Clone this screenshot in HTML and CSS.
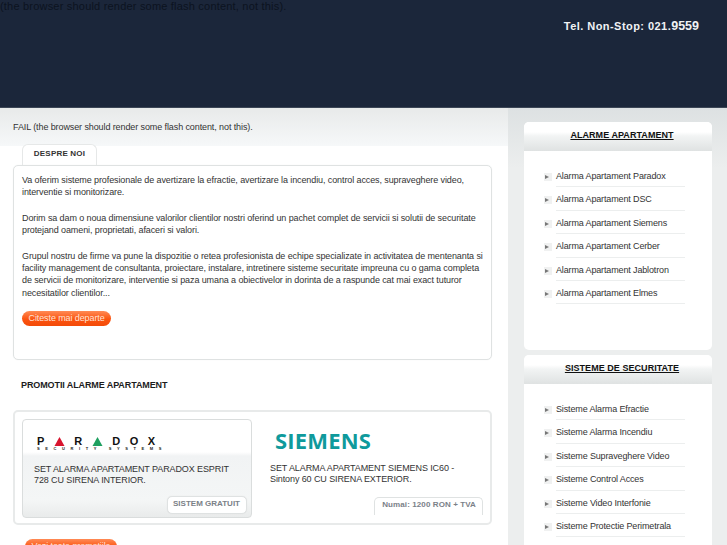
FILE: index.html
```html
<!DOCTYPE html>
<html lang="ro">
<head>
<meta charset="utf-8">
<title>Alarme apartament</title>
<link rel="stylesheet" href="styles.css">
</head>
<body>
<header class="top">
  <p class="flash-top">(the browser should render some flash content, not this).</p>
  <p class="phone">Tel. Non-Stop: 021.<span class="phone-big">9559</span></p>
</header>
<div class="page">
  <main class="main">
    <div class="flash-band">FAIL (the browser should render some flash content, not this).</div>
    <div class="tab">DESPRE NOI</div>
    <section class="about">
      <p>Va oferim sisteme profesionale de avertizare la efractie, avertizare la incendiu, control acces, supraveghere video, interventie si monitorizare.</p>
      <p>Dorim sa dam o noua dimensiune valorilor clientilor nostri oferind un pachet complet de servicii si solutii de securitate protejand oameni, proprietati, afaceri si valori.</p>
      <p>Grupul nostru de firme va pune la dispozitie o retea profesionista de echipe specializate in activitatea de mentenanta si facility management de consultanta, proiectare, instalare, intretinere sisteme securitate impreuna cu o gama completa de servicii de monitorizare, interventie si paza umana a obiectivelor in dorinta de a raspunde cat mai exact tuturor necesitatilor clientilor...</p>
      <a class="btn" href="#">Citeste mai departe</a>
    </section>
    <h2 class="promo-title">PROMOTII ALARME APARTAMENT</h2>
    <section class="promos">
      <article class="promo promo-on">
        <div class="logo logo-paradox">
          <div class="pdx-row">
            <span>P</span>
            <svg class="tri" viewBox="0 0 10 9"><path d="M5 0 10 9H0z" fill="#d8152f"/></svg>
            <span>R</span>
            <svg class="tri" viewBox="0 0 10 9"><path d="M5 0 10 9H0z" fill="#1fa060"/></svg>
            <span>D</span><span>O</span><span>X</span>
          </div>
          <div class="pdx-sub">SECURITY SYSTEMS</div>
        </div>
        <p class="promo-text">SET ALARMA APARTAMENT PARADOX ESPRIT 728 CU SIRENA INTERIOR.</p>
        <div class="badge-row"><span class="badge badge-on">SISTEM GRATUIT</span></div>
      </article>
      <article class="promo promo-off">
        <div class="logo logo-siemens">SIEMENS</div>
        <p class="promo-text">SET ALARMA APARTAMENT SIEMENS IC60 - Sintony 60 CU SIRENA EXTERIOR.</p>
        <div class="badge-row"><span class="badge">Numai: 1200 RON + TVA</span></div>
      </article>
    </section>
    <a class="btn btn-all" href="#">Vezi toate promotiile</a>
  </main>
  <aside class="side">
    <section class="panel panel-first">
      <h3 class="panel-title"><a href="#">ALARME APARTAMENT</a></h3>
      <ul class="menu">
        <li>Alarma Apartament Paradox</li>
        <li>Alarma Apartament DSC</li>
        <li>Alarma Apartament Siemens</li>
        <li>Alarma Apartament Cerber</li>
        <li>Alarma Apartament Jablotron</li>
        <li>Alarma Apartament Elmes</li>
      </ul>
    </section>
    <section class="panel">
      <h3 class="panel-title"><a href="#">SISTEME DE SECURITATE</a></h3>
      <ul class="menu">
        <li>Sisteme Alarma Efractie</li>
        <li>Sisteme Alarma Incendiu</li>
        <li>Sisteme Supraveghere Video</li>
        <li>Sisteme Control Acces</li>
        <li>Sisteme Video Interfonie</li>
        <li>Sisteme Protectie Perimetrala</li>
      </ul>
    </section>
  </aside>
</div>
</body>
</html>
```
FILE: styles.css
```css
* { box-sizing: border-box; }
html, body { margin: 0; padding: 0; height: 100%; overflow: hidden; }
body { font-family: "Liberation Sans", Arial, sans-serif; font-size: 9px; letter-spacing: -.1px; color: #333; background: #fff; }
p, h2, h3, ul { margin: 0; padding: 0; font-size: inherit; }

.top { height: 108px; background: #1b263a; border-bottom: 1px solid #3c4656; display: flex; justify-content: space-between; align-items: flex-start; }
.flash-top { font-size: 11px; line-height: 12px; color: #0c1320; letter-spacing: .2px; }
.phone { margin: 19px 28px 0 0; font-size: 11px; line-height: 14px; font-weight: bold; color: #f0f2f4; letter-spacing: .45px; }
.phone-big { font-size: 12.5px; letter-spacing: 0; }

.page { display: flex; align-items: flex-start; height: 437px; overflow: hidden; }
.main { width: 508px; flex: none; }
.flash-band { height: 38px; padding: 13px 0 0 13px; line-height: 12px; color: #333; background: linear-gradient(#e8eaea, #f6f8f9); }

.tab { margin: -2px 0 0 22px; width: 75px; height: 21px; padding-top: 3px; text-align: center; font-size: 8px; line-height: 12px; font-weight: bold; letter-spacing: .2px; color: #333; background: #fff; border: 1px solid #e6e8e8; border-bottom: 0; border-radius: 6px 6px 0 0; }

.about { margin: 0 16px 0 13px; height: 195px; padding: 8px 3px 0 8px; border: 1px solid #dfe2e2; border-radius: 5px; box-shadow: 0 0 1px #e6e8e8; line-height: 12.4px; }
.about p { margin-bottom: 13px; }
.btn { display: inline-block; height: 15px; padding: 0 6.5px; border-radius: 8px; background: linear-gradient(#ff8a55, #fb5410 55%, #f34a08); color: #ffe3d6; font-size: 9px; line-height: 14px; text-decoration: none; }
.about .btn { margin-top: -2px; }

.promo-title { margin: 19px 0 0 21px; height: 12px; line-height: 12px; font-weight: bold; color: #1c1c1c; }

.promos { margin: 19px 16px 0 13px; height: 115px; padding: 7px; display: flex; gap: 4px; border: 2px solid #e8eaea; border-radius: 5px; }
.promo { flex: none; width: 230px; height: 99px; display: flex; flex-direction: column; padding: 0 4px 0 0; }
.promo-on { background: linear-gradient(#fff 32px, #f1f3f4 36px, #f4f6f6 80px, #e9ebeb); border: 1px solid #dadddd; border-radius: 4px; }
.promo-off { margin-left: 3px; padding-right: 6px; }

.logo { height: 32px; margin-left: 11px; }
.logo-paradox { width: 134px; background: #fff; padding-top: 17px; }
.pdx-row { display: flex; align-items: center; gap: 9.5px; padding-left: 3px; font-weight: bold; font-size: 11px; line-height: 9px; color: #111; letter-spacing: 0; }
.tri { width: 11px; height: 9px; }
.pdx-sub { font-size: 4px; line-height: 5px; font-weight: bold; letter-spacing: 5.6px; color: #222; padding-left: 3px; white-space: nowrap; overflow: hidden; }
.logo-siemens { margin-left: 16px; padding-top: 9px; font-family: "Open Sans", sans-serif; font-weight: bold; font-size: 22px; line-height: 24px; color: #0f9a9c; letter-spacing: .2px; }

.promo-text { margin: 12px 0 0 11px; line-height: 11px; color: #333; }
.promo-on .promo-text { margin-right: 8px; }
.badge-row { margin-top: auto; display: flex; justify-content: flex-end; }
.badge { height: 18px; margin-bottom: 3px; padding: 1px 6px 0 7px; font-size: 8px; line-height: 12px; font-weight: bold; letter-spacing: .1px; color: #7b8188; background: #fff; border: 1px solid #dfe2e2; border-bottom: 0; border-radius: 5px 5px 0 0; white-space: nowrap; }
.badge-on { padding-left: 5px; letter-spacing: 0; border-bottom: 1px solid #dfe2e2; border-radius: 5px; box-shadow: 0 0 1px #ddd; }

.btn-all { margin: 14px 0 0 25px; }

.side { flex: 1; height: 100%; background: linear-gradient(#dde1e2, #eceeee 60px); padding: 14px 15px 0 16px; }
.panel { background: #fff; border-radius: 5px; height: 228px; overflow: hidden; margin-bottom: 5px; }
.panel-title { height: 29px; padding: 7px 0 0 8px; text-align: center; line-height: 12px; font-weight: bold; letter-spacing: .05px; background: linear-gradient(#fff 10px, #f2f4f4 14px, #dfe2e2); }
.panel-title a { color: #111; text-decoration: underline; }
.menu { list-style: none; padding: 18px 0 0 15px; }
.menu li { position: relative; height: 23.4px; padding-left: 17px; line-height: 14px; letter-spacing: -.14px; color: #333; background: linear-gradient(#f0f1f1, #f0f1f1) 5px 4px / 8px 8px no-repeat; }
.menu li::after { content: ""; position: absolute; left: 17px; right: 27px; bottom: 5px; border-bottom: 1px solid #eceeee; }
.menu li::before { content: ""; position: absolute; left: 6px; top: 6px; width: 0; height: 0; border-left: 4px solid #777; border-top: 2.5px solid transparent; border-bottom: 2.5px solid transparent; }
```
